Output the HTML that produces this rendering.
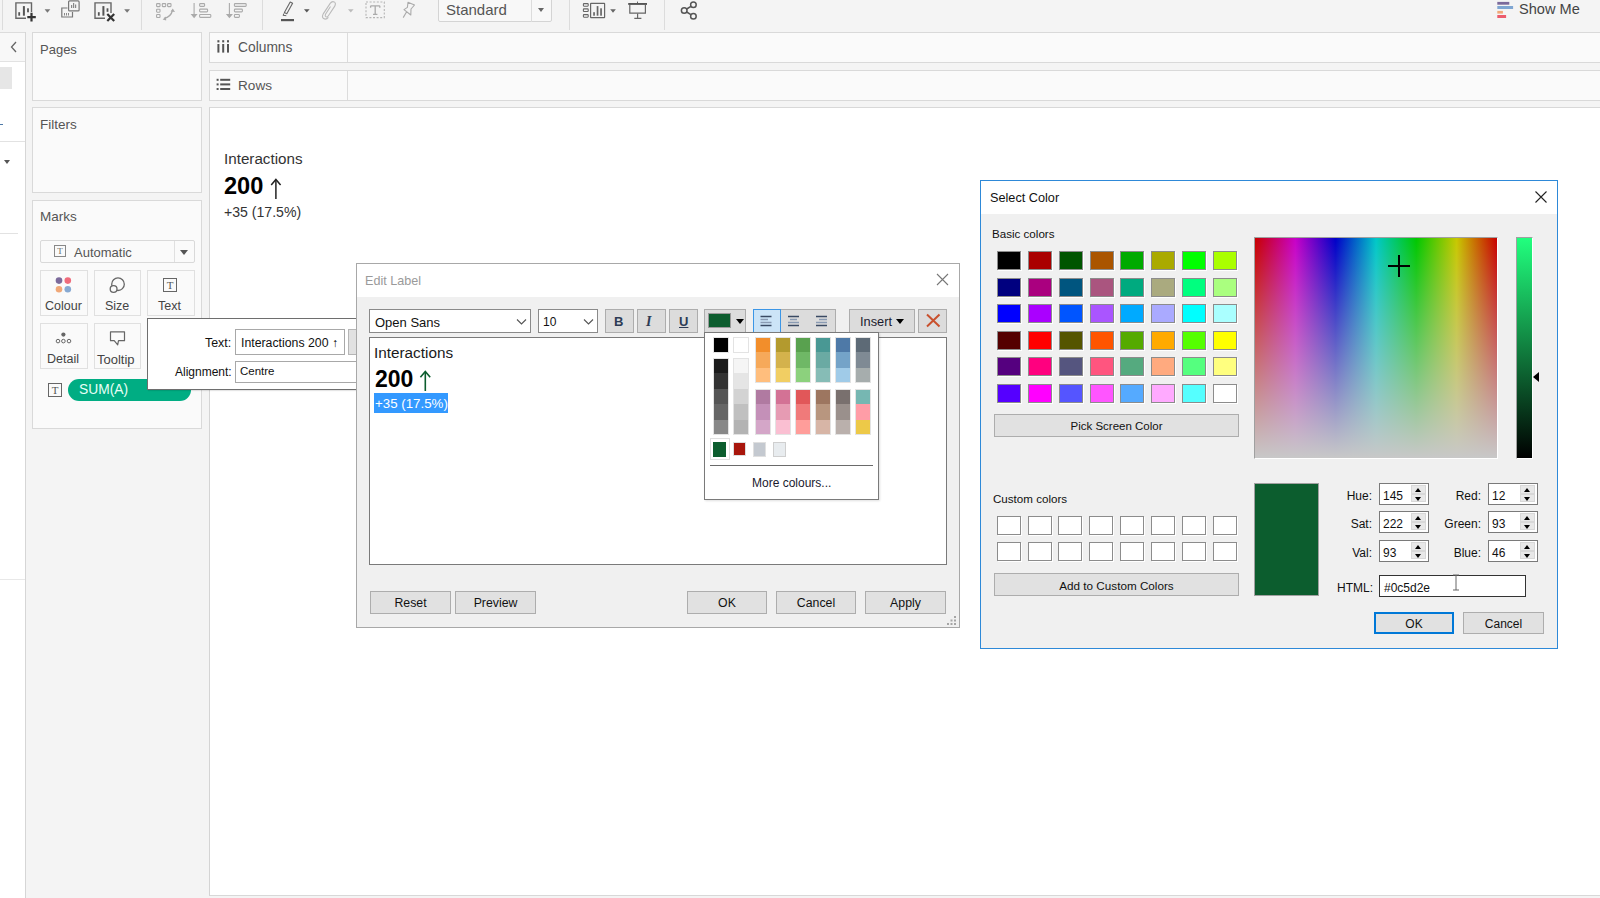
<!DOCTYPE html>
<html><head><meta charset="utf-8">
<style>
*{box-sizing:border-box;margin:0;padding:0}
html,body{width:1600px;height:898px;overflow:hidden;background:#fff;font-family:"Liberation Sans",sans-serif;position:relative}
.a{position:absolute}
.t{position:absolute;white-space:nowrap;line-height:1}
/* toolbar */
#tb{left:0;top:0;width:1600px;height:32px;background:#f4f4f4}
.sep{position:absolute;top:0;width:1px;height:30px;background:#dcdcdc}
/* panels */
.box{position:absolute;background:#fafafa;border:1px solid #d9d9d9}
.tbb{background:#dcdcdc;border:1px solid #adadad}
.wb{background:#e1e1e1;border:1px solid #adadad;font-size:12.3px;color:#111;text-align:center;line-height:23px;white-space:nowrap}
.sw{width:24px;height:19px;border:1px solid #8c8c8c;box-shadow:1px 1px 0 #fff}
.sp{width:50px;height:22px;background:#fff;border:1px solid #7a7a7a}
.spb{width:15px;background:#e8e8e8;border:1px solid #d8d8d8}
</style></head>
<body>
<!-- toolbar -->
<div id="tb" class="a">
  <div class="sep" style="left:2px"></div>
  <div class="sep" style="left:141px"></div>
  <div class="sep" style="left:262px"></div>
  <div class="sep" style="left:569px"></div>
  <div class="sep" style="left:664px"></div>
  <div class="a" style="left:438px;top:-2px;width:114px;height:24px;background:#f8f8f8;border:1px solid #d4d4d4;border-radius:0 0 2px 2px"></div>
  <div class="a" style="left:531px;top:0;width:1px;height:22px;background:#dcdcdc"></div>
  <div class="t" style="left:446px;top:2px;font-size:15px;color:#555">Standard</div>
  <div class="a" style="left:538px;top:8px;width:0;height:0;border-left:3.5px solid transparent;border-right:3.5px solid transparent;border-top:4px solid #666"></div>
<svg class="a" style="left:0;top:0" width="720" height="32">
<g fill="none" stroke="#666" stroke-width="1.4">
 <path d="M31.5 12 V2.9 H15.9 V18.2 H26"/>
</g>
<g fill="#555"><rect x="18.3" y="12.2" width="1.8" height="3.5"/><rect x="22.9" y="6.1" width="2" height="9.6"/><rect x="27.1" y="8.3" width="1.8" height="4"/></g>
<path d="M27.3 17.1 H35.8 M31.5 12.8 V21.4" stroke="#333" stroke-width="2.2"/>
<path d="M44.6 9.2 H50.3 L47.45 12.7 Z" fill="#777"/>
<g fill="none" stroke="#777" stroke-width="1.2">
 <path d="M67.5 8 H61.8 V17 H72.5 V12"/>
 <rect x="68.6" y="0.9" width="10.5" height="10" rx="1"/>
</g>
<g fill="#888"><rect x="64" y="13" width="1" height="2.5"/><rect x="66" y="13" width="1" height="2.5"/><rect x="68" y="13" width="1" height="2.5"/><rect x="71" y="5" width="1.2" height="3"/><rect x="73" y="3" width="1.2" height="5"/><rect x="75" y="4.5" width="1.2" height="3.5"/></g>
<g fill="none" stroke="#666" stroke-width="1.4"><path d="M111 13 V2.9 H95 V18.2 H105"/></g>
<g fill="#555"><rect x="97.9" y="12.2" width="1.8" height="3.5"/><rect x="102.4" y="6.1" width="2" height="9.6"/><rect x="106.6" y="8.3" width="1.8" height="3.5"/></g>
<path d="M107.3 14 L114.2 21 M114.2 14 L107.3 21" stroke="#333" stroke-width="2.2"/>
<path d="M124.2 9.2 H130 L127.1 12.7 Z" fill="#777"/>
<!-- swap -->
<g fill="none" stroke="#aaa" stroke-width="1.1">
 <rect x="156.6" y="3.6" width="3.4" height="3" rx=".6"/><rect x="162.3" y="3.6" width="3.4" height="3" rx=".6"/><rect x="167.6" y="3.6" width="3.4" height="3" rx=".6"/>
 <rect x="156.6" y="9.2" width="3.4" height="3" rx=".6"/><rect x="156.6" y="14.5" width="3.4" height="3" rx=".6"/>
 <path d="M164 18.3 Q171 17 172.4 10.5" stroke-width="1.3"/>
</g>
<path d="M172.8 8.5 L175 12 L170.6 11.6 Z M162.6 19.5 L166 16.6 L166.2 20.6 Z" fill="#aaa"/>
<!-- sort asc -->
<g stroke="#aaa" fill="none" stroke-width="1.1">
 <path d="M194.1 3 V15"/>
 <rect x="199.6" y="3.6" width="5" height="2.8" rx=".8"/><rect x="199.6" y="9.1" width="8" height="2.8" rx=".8"/><rect x="199.6" y="14.5" width="11.2" height="2.9" rx=".8"/>
 <path d="M229.4 3 V15"/>
 <rect x="234.4" y="3.6" width="11.8" height="2.8" rx=".8"/><rect x="234.4" y="9.1" width="8" height="2.8" rx=".8"/><rect x="234.4" y="14.5" width="5" height="2.9" rx=".8"/>
</g>
<path d="M190.6 14 H197.6 L194.1 18.2 Z M225.9 14 H232.9 L229.4 18.2 Z" fill="#aaa"/>
<!-- highlighter -->
<path d="M286.8 13.8 L292.6 3.2 L290.2 2 L284.4 12.6 Z" fill="none" stroke="#666" stroke-width="1.1" stroke-linejoin="round"/>
<path d="M284.2 13.2 L283 15.3 L286.3 15.7" fill="none" stroke="#666" stroke-width="1"/>
<rect x="281" y="19" width="13" height="2.2" fill="#555"/>
<path d="M304 9.3 H309.6 L306.8 12.6 Z" fill="#555"/>
<!-- paperclip -->
<path d="M330.5 6.5 L325.5 14.2 Q324.6 16 326 16.8 Q327.4 17.4 328.4 15.8 L334.6 6.4 Q336.4 3.2 334.2 1.9 Q332 0.8 330.2 3.4 L323.4 13.6 Q321.4 17.2 323.6 18.6 Q326.2 20 328.4 17.4" fill="none" stroke="#bbb" stroke-width="1.1"/>
<path d="M348 9.3 H353.6 L350.8 12.6 Z" fill="#bbb"/>
<!-- T box -->
<rect x="366" y="2" width="18.3" height="15.6" fill="none" stroke="#b5b5b5" stroke-width="1.1" stroke-dasharray="2 1.6"/>
<path d="M370.6 5.8 H379.8 M370.6 5.8 V7.8 M379.8 5.8 V7.8 M375.2 5.8 V14.4 M373 14.4 H377.4" fill="none" stroke="#aaa" stroke-width="1.3"/>
<!-- pin -->
<path d="M408 2.2 L414.5 5 L411 9 L410.8 15 L404 9.6 L407.4 7.4 Z M406.5 12 L403.2 17.6" fill="none" stroke="#aaa" stroke-width="1.1" stroke-linejoin="round"/>
<!-- show cards -->
<g fill="none" stroke="#666" stroke-width="1.1">
 <rect x="583.4" y="3.6" width="4.8" height="2.6" rx=".6"/><rect x="583.4" y="8.9" width="4.8" height="2.6" rx=".6"/><rect x="583.4" y="14.6" width="4.8" height="2.6" rx=".6"/>
 <rect x="590.6" y="3.3" width="14" height="14.4" rx=".4" stroke-width="1.2"/>
</g>
<g fill="#666"><rect x="593.2" y="12.2" width="1.7" height="3.5"/><rect x="596.7" y="6.1" width="1.7" height="9.6"/><rect x="600.2" y="8.3" width="1.7" height="7.4"/></g>
<path d="M610.2 9.2 H615.9 L613 12.7 Z" fill="#666"/>
<!-- presentation -->
<g fill="none" stroke="#666" stroke-width="1.2">
 <path d="M629.8 4.8 V13.2 H645.4 V4.8"/>
 <path d="M637.6 13.4 V18.3 M634.3 18.4 H641.4"/>
</g>
<rect x="628.2" y="3" width="18.8" height="1.9" fill="#555"/>
<rect x="637" y="1.6" width="1" height="1.5" fill="#666"/>
<!-- share -->
<g fill="none" stroke="#555" stroke-width="1.5">
 <circle cx="693.4" cy="4.8" r="2.8"/><circle cx="684.2" cy="10.5" r="2.8"/><circle cx="693.4" cy="16.2" r="2.8"/>
 <path d="M686.7 9 L690.9 6.4 M686.7 12 L690.9 14.6"/>
</g>
</svg>
<svg class="a" style="left:1490px;top:0" width="30" height="24">
 <rect x="7.3" y="1.9" width="12" height="2.8" fill="#7b6a9b"/>
 <rect x="7.3" y="6" width="15.8" height="3" fill="#7fa6d2"/>
 <rect x="7.3" y="10.9" width="5.6" height="2.7" fill="#f0a878"/>
 <rect x="7.3" y="15" width="8.8" height="3" fill="#ec5c6c"/>
</svg>
  <div class="t" style="left:1519px;top:2px;font-size:14.6px;color:#444">Show Me</div>
</div>

<!-- left data column -->
<div class="a" style="left:0;top:32px;width:26px;height:866px;background:#fff;border-right:1px solid #d6d6d6"></div>
<div class="a" style="left:0;top:32px;width:25px;height:30px;background:#f8f8f8;border-top:1px solid #dcdcdc;border-bottom:1px solid #e2e2e2"></div>

<!-- middle column -->
<div class="a" style="left:26px;top:32px;width:184px;height:866px;background:#f4f4f4"></div>
<div class="box" style="left:32px;top:32px;width:170px;height:69px"></div>
<div class="t" style="left:40px;top:43px;font-size:13px;color:#555">Pages</div>
<div class="box" style="left:32px;top:107px;width:170px;height:86px"></div>
<div class="t" style="left:40px;top:118px;font-size:13.5px;color:#555">Filters</div>
<div class="box" style="left:32px;top:200px;width:170px;height:229px"></div>
<div class="t" style="left:40px;top:210px;font-size:13.5px;color:#555">Marks</div>

<!-- shelves -->
<div class="a" style="left:210px;top:32px;width:1390px;height:866px;background:#f4f4f4"></div>
<div class="box" style="left:209px;top:32px;width:1391px;height:31px;border-right:none"></div>
<div class="a" style="left:347px;top:33px;width:1px;height:29px;background:#dcdcdc"></div>
<div class="t" style="left:238px;top:41px;font-size:13.8px;color:#555">Columns</div>
<div class="box" style="left:209px;top:70px;width:1391px;height:31px;border-right:none"></div>
<div class="a" style="left:347px;top:71px;width:1px;height:29px;background:#dcdcdc"></div>
<div class="t" style="left:238px;top:79px;font-size:13.6px;color:#555">Rows</div>

<svg class="a" style="left:214px;top:39px" width="20" height="18"><g fill="#555"><rect x="3.4" y="1.2" width="2" height="2.2"/><rect x="3.4" y="5" width="2" height="8.6"/><rect x="8.2" y="1.2" width="2" height="2.2"/><rect x="8.2" y="5" width="2" height="8.6"/><rect x="13" y="1.2" width="2" height="2.2"/><rect x="13" y="5" width="2" height="8.6"/></g></svg>
<svg class="a" style="left:214px;top:76px" width="20" height="18"><g fill="#555"><rect x="2.6" y="2.8" width="2" height="2"/><rect x="6.2" y="2.8" width="10" height="2"/><rect x="2.6" y="7.4" width="2" height="2"/><rect x="6.2" y="7.4" width="10" height="2"/><rect x="2.6" y="12" width="2" height="2"/><rect x="6.2" y="12" width="10" height="2"/></g></svg>
<!-- canvas -->
<div class="a" style="left:209px;top:107px;width:1391px;height:789px;background:#fff;border-top:1px solid #d8d8d8;border-left:1px solid #d4d4d4;border-bottom:1px solid #d8d8d8"></div>
<div class="t" style="left:224px;top:151px;font-size:15.2px;color:#333">Interactions</div>
<div class="t" style="left:224px;top:175px;font-size:23.6px;font-weight:bold;color:#000">200</div>
<svg class="a" style="left:270px;top:178px" width="12" height="22"><path d="M5.9 2 V21" stroke="#222" stroke-width="1.5"/><path d="M1.2 7 L5.9 1.4 L10.6 7" fill="none" stroke="#222" stroke-width="1.5"/></svg>
<div class="t" style="left:224px;top:205px;font-size:14.1px;color:#333">+35 (17.5%)</div>


<!-- left column details -->
<div class="a" style="left:0;top:67px;width:12px;height:22px;background:#e6e6e6"></div>
<div class="a" style="left:0;top:124px;width:3px;height:1px;background:#4e79a7"></div>
<div class="a" style="left:0;top:141px;width:25px;height:1px;background:#e2e2e2"></div>
<div class="a" style="left:4px;top:160px;width:0;height:0;border-left:3px solid transparent;border-right:3px solid transparent;border-top:4px solid #555"></div>
<div class="a" style="left:0;top:233px;width:18px;height:1px;background:#e2e2e2"></div>
<div class="a" style="left:0;top:579px;width:25px;height:1px;background:#e8e8e8"></div>
<svg class="a" style="left:9px;top:40px" width="10" height="14"><path d="M7 2 L2.5 7 L7 12" fill="none" stroke="#666" stroke-width="1.3"/></svg>

<!-- marks card -->
<div class="a" style="left:40px;top:240px;width:155px;height:23px;background:#fafafa;border:1px solid #d9d9d9;border-radius:2px"></div>
<div class="a" style="left:174px;top:241px;width:1px;height:21px;background:#e0e0e0"></div>
<div class="a" style="left:180px;top:250px;width:0;height:0;border-left:4px solid transparent;border-right:4px solid transparent;border-top:5px solid #555"></div>
<div class="a" style="left:54px;top:245px;width:12px;height:12px;border:1px solid #888;font-size:9px;color:#666;text-align:center;line-height:10px;font-family:'Liberation Serif',serif">T</div>
<div class="t" style="left:74px;top:246px;font-size:13px;color:#555">Automatic</div>

<div class="a" style="left:40px;top:270px;width:48px;height:46px;background:#fafafa;border:1px solid #e0e0e0"></div>
<div class="a" style="left:94px;top:270px;width:47px;height:46px;background:#fafafa;border:1px solid #e0e0e0"></div>
<div class="a" style="left:147px;top:270px;width:48px;height:46px;background:#fafafa;border:1px solid #e0e0e0"></div>
<div class="a" style="left:40px;top:323px;width:48px;height:46px;background:#fafafa;border:1px solid #e0e0e0"></div>
<div class="a" style="left:94px;top:323px;width:47px;height:46px;background:#fafafa;border:1px solid #e0e0e0"></div>
<svg class="a" style="left:52px;top:274px" width="24" height="20">
 <circle cx="7" cy="6.6" r="3.3" fill="#7b6a9b"/><circle cx="15.8" cy="6.6" r="3.3" fill="#ef6b7b"/>
 <circle cx="7" cy="15.3" r="3.3" fill="#f0a878"/><circle cx="15.8" cy="15.3" r="3.3" fill="#87a9d2"/>
</svg>
<svg class="a" style="left:104px;top:274px" width="24" height="22">
 <circle cx="14" cy="10.2" r="6.3" fill="none" stroke="#666" stroke-width="1.3"/>
 <circle cx="9.6" cy="15" r="3.4" fill="#fafafa" stroke="#666" stroke-width="1.3"/>
</svg>
<div class="a" style="left:163px;top:278px;width:14px;height:14px;border:1px solid #666;font-size:11px;color:#555;text-align:center;line-height:12px;font-family:'Liberation Serif',serif">T</div>
<div class="t" style="left:45px;top:300px;font-size:12.5px;color:#444">Colour</div>
<div class="t" style="left:105px;top:300px;font-size:12.5px;color:#444">Size</div>
<div class="t" style="left:158px;top:300px;font-size:12.5px;color:#444">Text</div>
<svg class="a" style="left:52px;top:328px" width="24" height="18">
 <circle cx="11.4" cy="6.6" r="2.1" fill="#666"/>
 <circle cx="6" cy="13.1" r="1.8" fill="none" stroke="#666" stroke-width="1"/>
 <circle cx="11.4" cy="13.1" r="1.8" fill="none" stroke="#666" stroke-width="1"/>
 <circle cx="17" cy="13.1" r="1.8" fill="none" stroke="#666" stroke-width="1"/>
</svg>
<svg class="a" style="left:106px;top:328px" width="24" height="20">
 <path d="M4.5 3.8 H18.5 V12.7 H12.5 L11.7 16.8 L8.2 12.7 H4.5 Z" fill="none" stroke="#666" stroke-width="1.2" stroke-linejoin="round"/>
</svg>
<div class="t" style="left:47px;top:353px;font-size:12.5px;color:#444">Detail</div>
<div class="t" style="left:97px;top:353px;font-size:13px;color:#444">Tooltip</div>

<div class="a" style="left:48px;top:383px;width:14px;height:14px;border:1px solid #666;font-size:11px;color:#555;text-align:center;line-height:12px;font-family:'Liberation Serif',serif">T</div>
<div class="a" style="left:68px;top:379px;width:123px;height:22px;background:#00ad83;border-radius:11px"></div>
<div class="t" style="left:79px;top:383px;font-size:13.8px;color:#e8fff6">SUM(A)</div>

<!-- text popup -->
<div class="a" style="left:147px;top:318px;width:215px;height:72px;background:#fff;border:1px solid #6e6e6e;box-shadow:1px 1px 1px rgba(0,0,0,.1)"></div>
<div class="t" style="left:205px;top:337px;font-size:12.4px;color:#111">Text:</div>
<div class="t" style="left:175px;top:366px;font-size:12px;color:#111">Alignment:</div>
<div class="a" style="left:235px;top:329px;width:110px;height:26px;background:#fff;border:1px solid #a8a8a8"></div>
<div class="t" style="left:241px;top:337px;font-size:12.3px;color:#111">Interactions 200 ↑</div>
<div class="a" style="left:348px;top:329px;width:14px;height:26px;background:#e1e1e1;border:1px solid #b5b5b5"></div>
<div class="a" style="left:235px;top:361px;width:127px;height:22px;background:#fff;border:1px solid #a8a8a8"></div>
<div class="t" style="left:240px;top:366px;font-size:11.5px;color:#111">Centre</div>


<!-- EDIT LABEL DIALOG -->
<div class="a" style="left:356px;top:263px;width:604px;height:365px;background:#f0f0f0;border:1px solid #a8a8a8"></div>
<div class="a" style="left:357px;top:264px;width:602px;height:33px;background:#fff"></div>
<div class="t" style="left:365px;top:275px;font-size:12.6px;color:#9a9a9a">Edit Label</div>
<svg class="a" style="left:936px;top:273px" width="13" height="13"><path d="M1 1 L12 12 M12 1 L1 12" stroke="#777" stroke-width="1.1"/></svg>

<!-- font combo -->
<div class="a" style="left:369px;top:309px;width:162px;height:24px;background:#fff;border:1px solid #8a8a8a"></div>
<div class="t" style="left:375px;top:316px;font-size:13px;color:#111">Open Sans</div>
<svg class="a" style="left:516px;top:318px" width="12" height="8"><path d="M1 1.5 L5.5 6 L10 1.5" fill="none" stroke="#555" stroke-width="1.1"/></svg>
<div class="a" style="left:538px;top:309px;width:60px;height:24px;background:#fff;border:1px solid #8a8a8a"></div>
<div class="t" style="left:543px;top:316px;font-size:12px;color:#111">10</div>
<svg class="a" style="left:583px;top:318px" width="12" height="8"><path d="M1 1.5 L5.5 6 L10 1.5" fill="none" stroke="#555" stroke-width="1.1"/></svg>

<div class="a tbb" style="left:605px;top:309px;width:29px;height:24px"></div>
<div class="a tbb" style="left:637px;top:309px;width:29px;height:24px"></div>
<div class="a tbb" style="left:669px;top:309px;width:29px;height:24px"></div>
<div class="t" style="left:614px;top:315px;font-size:13px;font-weight:bold;color:#2d3b55">B</div>
<div class="t" style="left:646px;top:315px;font-size:14px;font-weight:bold;font-style:italic;color:#2d3b55;font-family:'Liberation Serif',serif">I</div>
<div class="t" style="left:679px;top:315px;font-size:13px;font-weight:bold;color:#2d3b55;text-decoration:underline">U</div>

<div class="a tbb" style="left:704px;top:309px;width:42px;height:24px"></div>
<div class="a" style="left:708px;top:313px;width:23px;height:15px;background:#0c5d2e;border:1px solid #9a9a9a"></div>
<div class="a" style="left:736px;top:319px;width:0;height:0;border-left:4px solid transparent;border-right:4px solid transparent;border-top:5px solid #000"></div>

<div class="a tbb" style="left:753px;top:309px;width:83px;height:24px"></div>
<div class="a" style="left:753px;top:309px;width:28px;height:24px;background:#cce4f7;border:1px solid #3c96e6"></div>
<svg class="a" style="left:755px;top:312px" width="80" height="18">
 <g stroke-width="1.3">
 <path d="M5.5 4.5 H16.5 M5.5 13.5 H16.5" stroke="#3a4a63"/>
 <path d="M5.5 7.5 H13 M5.5 10.5 H16.5" stroke="#8a9bb3"/>
 <path d="M33 4.5 H44 M33 13.5 H44" stroke="#3a4a63"/>
 <path d="M35 7.5 H42 M33 10.5 H44" stroke="#8a9bb3"/>
 <path d="M61 4.5 H72 M61 13.5 H72" stroke="#3a4a63"/>
 <path d="M64 7.5 H72 M61 10.5 H72" stroke="#8a9bb3"/>
 </g>
</svg>

<div class="a tbb" style="left:849px;top:309px;width:66px;height:24px"></div>
<div class="t" style="left:860px;top:316px;font-size:12.8px;color:#1a1a2e">Insert</div>
<div class="a" style="left:896px;top:319px;width:0;height:0;border-left:4px solid transparent;border-right:4px solid transparent;border-top:5px solid #000"></div>
<div class="a tbb" style="left:918px;top:309px;width:29px;height:24px"></div>
<svg class="a" style="left:918px;top:309px" width="29" height="23"><path d="M9 5.5 L21.5 17.5 M21.5 5.5 L9 17.5" stroke="#c9512e" stroke-width="2"/></svg>

<!-- text area -->
<div class="a" style="left:369px;top:337px;width:578px;height:228px;background:#fff;border:1px solid #7a7a7a"></div>
<div class="t" style="left:374px;top:345px;font-size:15.3px;color:#1a1a1a">Interactions</div>
<div class="t" style="left:375px;top:368px;font-size:23px;font-weight:bold;color:#000">200</div>
<svg class="a" style="left:419px;top:370px" width="13" height="22"><path d="M6.3 2 V21" stroke="#0c5d2e" stroke-width="1.6"/><path d="M1.4 7.2 L6.3 1.4 L11.2 7.2" fill="none" stroke="#0c5d2e" stroke-width="1.6"/></svg>
<div class="a" style="left:374px;top:393px;width:74px;height:20px;background:#3399ff"></div>
<div class="t" style="left:375px;top:397px;font-size:13.3px;color:#fff">+35 (17.5%)</div>

<!-- bottom buttons -->
<div class="a wb" style="left:370px;top:591px;width:81px;height:23px">Reset</div>
<div class="a wb" style="left:455px;top:591px;width:81px;height:23px">Preview</div>
<div class="a wb" style="left:687px;top:591px;width:80px;height:23px">OK</div>
<div class="a wb" style="left:776px;top:591px;width:80px;height:23px">Cancel</div>
<div class="a wb" style="left:865px;top:591px;width:81px;height:23px">Apply</div>
<svg class="a" style="left:944px;top:613px" width="14" height="14"><g fill="#a5a5a5"><rect x="10" y="3" width="2" height="2"/><rect x="6.5" y="6.5" width="2" height="2"/><rect x="10" y="6.5" width="2" height="2"/><rect x="3" y="10" width="2" height="2"/><rect x="6.5" y="10" width="2" height="2"/><rect x="10" y="10" width="2" height="2"/></g></svg>

<!-- COLOUR POPUP -->
<div class="a" style="left:704px;top:332px;width:175px;height:168px;background:#fff;border:1px solid #7a7a7a;box-shadow:1px 1px 2px rgba(0,0,0,.12)"></div>
<div class="a" style="left:713px;top:337px;width:16px;height:16px;border:1px solid #e3e3e3;background:#e3e3e3"><div style="position:absolute;left:0;top:0px;width:14px;height:14px;background:#000000"></div></div>
<div class="a" style="left:733px;top:337px;width:16px;height:16px;border:1px solid #e3e3e3;background:#e3e3e3"><div style="position:absolute;left:0;top:0px;width:14px;height:14px;background:#ffffff"></div></div>
<div class="a" style="left:713px;top:358px;width:16px;height:77px;border:1px solid #e3e3e3;background:#e3e3e3"><div style="position:absolute;left:0;top:0px;width:14px;height:14px;background:#1b1b1b"></div><div style="position:absolute;left:0;top:14px;width:14px;height:16px;background:#333333"></div><div style="position:absolute;left:0;top:30px;width:14px;height:15px;background:#555555"></div><div style="position:absolute;left:0;top:45px;width:14px;height:16px;background:#666666"></div><div style="position:absolute;left:0;top:61px;width:14px;height:14px;background:#888888"></div></div>
<div class="a" style="left:733px;top:358px;width:16px;height:77px;border:1px solid #e3e3e3;background:#e3e3e3"><div style="position:absolute;left:0;top:0px;width:14px;height:14px;background:#f5f5f5"></div><div style="position:absolute;left:0;top:14px;width:14px;height:16px;background:#e5e5e5"></div><div style="position:absolute;left:0;top:30px;width:14px;height:15px;background:#d3d3d3"></div><div style="position:absolute;left:0;top:45px;width:14px;height:16px;background:#c0c0c0"></div><div style="position:absolute;left:0;top:61px;width:14px;height:14px;background:#b3b3b3"></div></div>
<div class="a" style="left:755px;top:337px;width:16px;height:46px;border:1px solid #e3e3e3;background:#e3e3e3"><div style="position:absolute;left:0;top:0px;width:14px;height:14px;background:#f28e2b"></div><div style="position:absolute;left:0;top:14px;width:14px;height:16px;background:#f6a95a"></div><div style="position:absolute;left:0;top:30px;width:14px;height:14px;background:#ffbe7d"></div></div>
<div class="a" style="left:775px;top:337px;width:16px;height:46px;border:1px solid #e3e3e3;background:#e3e3e3"><div style="position:absolute;left:0;top:0px;width:14px;height:14px;background:#b39a2e"></div><div style="position:absolute;left:0;top:14px;width:14px;height:16px;background:#d4b24c"></div><div style="position:absolute;left:0;top:30px;width:14px;height:14px;background:#f1ce63"></div></div>
<div class="a" style="left:795px;top:337px;width:16px;height:46px;border:1px solid #e3e3e3;background:#e3e3e3"><div style="position:absolute;left:0;top:0px;width:14px;height:14px;background:#59a14f"></div><div style="position:absolute;left:0;top:14px;width:14px;height:16px;background:#6fb866"></div><div style="position:absolute;left:0;top:30px;width:14px;height:14px;background:#8cd17d"></div></div>
<div class="a" style="left:815px;top:337px;width:16px;height:46px;border:1px solid #e3e3e3;background:#e3e3e3"><div style="position:absolute;left:0;top:0px;width:14px;height:14px;background:#499894"></div><div style="position:absolute;left:0;top:14px;width:14px;height:16px;background:#6aaaa3"></div><div style="position:absolute;left:0;top:30px;width:14px;height:14px;background:#86bcb6"></div></div>
<div class="a" style="left:835px;top:337px;width:16px;height:46px;border:1px solid #e3e3e3;background:#e3e3e3"><div style="position:absolute;left:0;top:0px;width:14px;height:14px;background:#4e79a7"></div><div style="position:absolute;left:0;top:14px;width:14px;height:16px;background:#74a3c8"></div><div style="position:absolute;left:0;top:30px;width:14px;height:14px;background:#a0cbe8"></div></div>
<div class="a" style="left:855px;top:337px;width:16px;height:46px;border:1px solid #e3e3e3;background:#e3e3e3"><div style="position:absolute;left:0;top:0px;width:14px;height:14px;background:#5d6a76"></div><div style="position:absolute;left:0;top:14px;width:14px;height:16px;background:#7f8a94"></div><div style="position:absolute;left:0;top:30px;width:14px;height:14px;background:#a6adad"></div></div>
<div class="a" style="left:755px;top:389px;width:16px;height:46px;border:1px solid #e3e3e3;background:#e3e3e3"><div style="position:absolute;left:0;top:0px;width:14px;height:14px;background:#b07aa1"></div><div style="position:absolute;left:0;top:14px;width:14px;height:16px;background:#c490b8"></div><div style="position:absolute;left:0;top:30px;width:14px;height:14px;background:#d4a6c8"></div></div>
<div class="a" style="left:775px;top:389px;width:16px;height:46px;border:1px solid #e3e3e3;background:#e3e3e3"><div style="position:absolute;left:0;top:0px;width:14px;height:14px;background:#d37295"></div><div style="position:absolute;left:0;top:14px;width:14px;height:16px;background:#e69bb3"></div><div style="position:absolute;left:0;top:30px;width:14px;height:14px;background:#fabfd2"></div></div>
<div class="a" style="left:795px;top:389px;width:16px;height:46px;border:1px solid #e3e3e3;background:#e3e3e3"><div style="position:absolute;left:0;top:0px;width:14px;height:14px;background:#e15759"></div><div style="position:absolute;left:0;top:14px;width:14px;height:16px;background:#f07a7a"></div><div style="position:absolute;left:0;top:30px;width:14px;height:14px;background:#ff9d9a"></div></div>
<div class="a" style="left:815px;top:389px;width:16px;height:46px;border:1px solid #e3e3e3;background:#e3e3e3"><div style="position:absolute;left:0;top:0px;width:14px;height:14px;background:#9d7660"></div><div style="position:absolute;left:0;top:14px;width:14px;height:16px;background:#b8967f"></div><div style="position:absolute;left:0;top:30px;width:14px;height:14px;background:#d7b5a6"></div></div>
<div class="a" style="left:835px;top:389px;width:16px;height:46px;border:1px solid #e3e3e3;background:#e3e3e3"><div style="position:absolute;left:0;top:0px;width:14px;height:14px;background:#79706e"></div><div style="position:absolute;left:0;top:14px;width:14px;height:16px;background:#9a908c"></div><div style="position:absolute;left:0;top:30px;width:14px;height:14px;background:#bab0ac"></div></div>
<div class="a" style="left:855px;top:389px;width:16px;height:46px;border:1px solid #e3e3e3;background:#e3e3e3"><div style="position:absolute;left:0;top:0px;width:14px;height:14px;background:#76b7b2"></div><div style="position:absolute;left:0;top:14px;width:14px;height:16px;background:#ff9da7"></div><div style="position:absolute;left:0;top:30px;width:14px;height:14px;background:#edc948"></div></div>
<div class="a" style="left:710px;top:438px;width:20px;height:22px;border:1px solid #e0e0e0;background:#fff"></div>
<div class="a" style="left:713px;top:442px;width:13px;height:15px;background:#0c5d2e"></div>
<div class="a" style="left:733px;top:442px;width:13px;height:14px;background:#a8160c;border:1px solid #ddd"></div>
<div class="a" style="left:753px;top:442px;width:13px;height:15px;background:#c4c9d0;border:1px solid #e0e0e0"></div>
<div class="a" style="left:773px;top:442px;width:13px;height:15px;background:#e8ecef;border:1px solid #cfcfcf"></div>
<div class="a" style="left:710px;top:465px;width:163px;height:1px;background:#6a6a6a"></div>
<div class="t" style="left:752px;top:477px;font-size:12px;color:#1a1a2e">More colours...</div>
<!-- SELECT COLOR DIALOG -->
<div class="a" style="left:980px;top:180px;width:578px;height:469px;background:#f0f0f0;border:1px solid #2e89d8"></div>
<div class="a" style="left:981px;top:181px;width:576px;height:33px;background:#fff"></div>
<div class="t" style="left:990px;top:192px;font-size:12.7px;color:#111">Select Color</div>
<svg class="a" style="left:1534px;top:190px" width="14" height="14"><path d="M1.5 1.5 L12.5 12.5 M12.5 1.5 L1.5 12.5" stroke="#222" stroke-width="1.1"/></svg>
<div class="t" style="left:992px;top:228px;font-size:11.6px;color:#111">Basic colors</div>
<div class="a sw" style="left:997px;top:251px;background:#000000"></div>
<div class="a sw" style="left:997px;top:278px;background:#00007f"></div>
<div class="a sw" style="left:997px;top:304px;background:#0000ff"></div>
<div class="a sw" style="left:997px;top:331px;background:#550000"></div>
<div class="a sw" style="left:997px;top:357px;background:#55007f"></div>
<div class="a sw" style="left:997px;top:384px;background:#5500ff"></div>
<div class="a sw" style="left:1028px;top:251px;background:#aa0000"></div>
<div class="a sw" style="left:1028px;top:278px;background:#aa007f"></div>
<div class="a sw" style="left:1028px;top:304px;background:#aa00ff"></div>
<div class="a sw" style="left:1028px;top:331px;background:#ff0000"></div>
<div class="a sw" style="left:1028px;top:357px;background:#ff007f"></div>
<div class="a sw" style="left:1028px;top:384px;background:#ff00ff"></div>
<div class="a sw" style="left:1059px;top:251px;background:#005500"></div>
<div class="a sw" style="left:1059px;top:278px;background:#00557f"></div>
<div class="a sw" style="left:1059px;top:304px;background:#0055ff"></div>
<div class="a sw" style="left:1059px;top:331px;background:#555500"></div>
<div class="a sw" style="left:1059px;top:357px;background:#55557f"></div>
<div class="a sw" style="left:1059px;top:384px;background:#5555ff"></div>
<div class="a sw" style="left:1090px;top:251px;background:#aa5500"></div>
<div class="a sw" style="left:1090px;top:278px;background:#aa557f"></div>
<div class="a sw" style="left:1090px;top:304px;background:#aa55ff"></div>
<div class="a sw" style="left:1090px;top:331px;background:#ff5500"></div>
<div class="a sw" style="left:1090px;top:357px;background:#ff557f"></div>
<div class="a sw" style="left:1090px;top:384px;background:#ff55ff"></div>
<div class="a sw" style="left:1120px;top:251px;background:#00aa00"></div>
<div class="a sw" style="left:1120px;top:278px;background:#00aa7f"></div>
<div class="a sw" style="left:1120px;top:304px;background:#00aaff"></div>
<div class="a sw" style="left:1120px;top:331px;background:#55aa00"></div>
<div class="a sw" style="left:1120px;top:357px;background:#55aa7f"></div>
<div class="a sw" style="left:1120px;top:384px;background:#55aaff"></div>
<div class="a sw" style="left:1151px;top:251px;background:#aaaa00"></div>
<div class="a sw" style="left:1151px;top:278px;background:#aaaa7f"></div>
<div class="a sw" style="left:1151px;top:304px;background:#aaaaff"></div>
<div class="a sw" style="left:1151px;top:331px;background:#ffaa00"></div>
<div class="a sw" style="left:1151px;top:357px;background:#ffaa7f"></div>
<div class="a sw" style="left:1151px;top:384px;background:#ffaaff"></div>
<div class="a sw" style="left:1182px;top:251px;background:#00ff00"></div>
<div class="a sw" style="left:1182px;top:278px;background:#00ff7f"></div>
<div class="a sw" style="left:1182px;top:304px;background:#00ffff"></div>
<div class="a sw" style="left:1182px;top:331px;background:#55ff00"></div>
<div class="a sw" style="left:1182px;top:357px;background:#55ff7f"></div>
<div class="a sw" style="left:1182px;top:384px;background:#55ffff"></div>
<div class="a sw" style="left:1213px;top:251px;background:#aaff00"></div>
<div class="a sw" style="left:1213px;top:278px;background:#aaff7f"></div>
<div class="a sw" style="left:1213px;top:304px;background:#aaffff"></div>
<div class="a sw" style="left:1213px;top:331px;background:#ffff00"></div>
<div class="a sw" style="left:1213px;top:357px;background:#ffff7f"></div>
<div class="a sw" style="left:1213px;top:384px;background:#ffffff"></div>
<div class="a wb" style="left:994px;top:414px;width:245px;height:23px;font-size:11.5px;line-height:23px">Pick Screen Color</div>
<div class="t" style="left:993px;top:493px;font-size:11.6px;color:#111">Custom colors</div>
<div class="a sw" style="left:997px;top:516px;background:#fff"></div>
<div class="a sw" style="left:997px;top:542px;background:#fff"></div>
<div class="a sw" style="left:1028px;top:516px;background:#fff"></div>
<div class="a sw" style="left:1028px;top:542px;background:#fff"></div>
<div class="a sw" style="left:1058px;top:516px;background:#fff"></div>
<div class="a sw" style="left:1058px;top:542px;background:#fff"></div>
<div class="a sw" style="left:1089px;top:516px;background:#fff"></div>
<div class="a sw" style="left:1089px;top:542px;background:#fff"></div>
<div class="a sw" style="left:1120px;top:516px;background:#fff"></div>
<div class="a sw" style="left:1120px;top:542px;background:#fff"></div>
<div class="a sw" style="left:1151px;top:516px;background:#fff"></div>
<div class="a sw" style="left:1151px;top:542px;background:#fff"></div>
<div class="a sw" style="left:1182px;top:516px;background:#fff"></div>
<div class="a sw" style="left:1182px;top:542px;background:#fff"></div>
<div class="a sw" style="left:1213px;top:516px;background:#fff"></div>
<div class="a sw" style="left:1213px;top:542px;background:#fff"></div>
<div class="a wb" style="left:994px;top:573px;width:245px;height:23px;font-size:11.7px;line-height:23px">Add to Custom Colors</div>
<div class="a" style="left:1254px;top:237px;width:244px;height:222px;border-top:1px solid #a0a0a0;border-left:1px solid #a0a0a0;border-right:1px solid #fff;border-bottom:1px solid #fff"></div>
<div class="a" style="left:1255px;top:238px;width:242px;height:220px;background:linear-gradient(to bottom, rgba(200,200,200,0), rgb(200,200,200)), linear-gradient(to right, rgb(200,0,0) 0%, rgb(200,0,200) 16.667%, rgb(0,0,200) 33.333%, rgb(0,200,200) 50%, rgb(0,200,0) 66.667%, rgb(200,200,0) 83.333%, rgb(200,0,0) 100%)"></div>
<div class="a" style="left:1398px;top:255px;width:2px;height:22px;background:#000"></div>
<div class="a" style="left:1388px;top:265px;width:22px;height:2px;background:#000"></div>
<div class="a" style="left:1516px;top:237px;width:17px;height:222px;border-top:1px solid #a0a0a0;border-left:1px solid #a0a0a0;border-right:1px solid #fff;border-bottom:1px solid #fff"></div>
<div class="a" style="left:1517px;top:238px;width:15px;height:220px;background:linear-gradient(to bottom, rgb(33,255,126), rgb(0,0,0))"></div>
<div class="a" style="left:1533px;top:372px;width:0;height:0;border-top:5px solid transparent;border-bottom:5px solid transparent;border-right:6px solid #000"></div>
<div class="a" style="left:1254px;top:483px;width:65px;height:113px;background:#0c5d2e;border:1px solid #a0a0a0"></div>
<div class="a sp" style="left:1379px;top:483px"></div><div class="t" style="left:1383px;top:490px;font-size:12px;color:#111">145</div><div class="a spb" style="left:1411px;top:485px;height:9px"></div><div class="a spb" style="left:1411px;top:494px;height:8px"></div><div class="a" style="left:1415px;top:488px;width:0;height:0;border-left:3.5px solid transparent;border-right:3.5px solid transparent;border-bottom:4px solid #000"></div><div class="a" style="left:1415px;top:497px;width:0;height:0;border-left:3.5px solid transparent;border-right:3.5px solid transparent;border-top:4px solid #000"></div><div class="t" style="left:1252px;width:120px;text-align:right;top:490px;font-size:12px;color:#111">Hue:</div>
<div class="a sp" style="left:1379px;top:511px"></div><div class="t" style="left:1383px;top:518px;font-size:12px;color:#111">222</div><div class="a spb" style="left:1411px;top:513px;height:9px"></div><div class="a spb" style="left:1411px;top:522px;height:8px"></div><div class="a" style="left:1415px;top:516px;width:0;height:0;border-left:3.5px solid transparent;border-right:3.5px solid transparent;border-bottom:4px solid #000"></div><div class="a" style="left:1415px;top:525px;width:0;height:0;border-left:3.5px solid transparent;border-right:3.5px solid transparent;border-top:4px solid #000"></div><div class="t" style="left:1252px;width:120px;text-align:right;top:518px;font-size:12px;color:#111">Sat:</div>
<div class="a sp" style="left:1379px;top:540px"></div><div class="t" style="left:1383px;top:547px;font-size:12px;color:#111">93</div><div class="a spb" style="left:1411px;top:542px;height:9px"></div><div class="a spb" style="left:1411px;top:551px;height:8px"></div><div class="a" style="left:1415px;top:545px;width:0;height:0;border-left:3.5px solid transparent;border-right:3.5px solid transparent;border-bottom:4px solid #000"></div><div class="a" style="left:1415px;top:554px;width:0;height:0;border-left:3.5px solid transparent;border-right:3.5px solid transparent;border-top:4px solid #000"></div><div class="t" style="left:1252px;width:120px;text-align:right;top:547px;font-size:12px;color:#111">Val:</div>
<div class="a sp" style="left:1488px;top:483px"></div><div class="t" style="left:1492px;top:490px;font-size:12px;color:#111">12</div><div class="a spb" style="left:1520px;top:485px;height:9px"></div><div class="a spb" style="left:1520px;top:494px;height:8px"></div><div class="a" style="left:1524px;top:488px;width:0;height:0;border-left:3.5px solid transparent;border-right:3.5px solid transparent;border-bottom:4px solid #000"></div><div class="a" style="left:1524px;top:497px;width:0;height:0;border-left:3.5px solid transparent;border-right:3.5px solid transparent;border-top:4px solid #000"></div><div class="t" style="left:1361px;width:120px;text-align:right;top:490px;font-size:12px;color:#111">Red:</div>
<div class="a sp" style="left:1488px;top:511px"></div><div class="t" style="left:1492px;top:518px;font-size:12px;color:#111">93</div><div class="a spb" style="left:1520px;top:513px;height:9px"></div><div class="a spb" style="left:1520px;top:522px;height:8px"></div><div class="a" style="left:1524px;top:516px;width:0;height:0;border-left:3.5px solid transparent;border-right:3.5px solid transparent;border-bottom:4px solid #000"></div><div class="a" style="left:1524px;top:525px;width:0;height:0;border-left:3.5px solid transparent;border-right:3.5px solid transparent;border-top:4px solid #000"></div><div class="t" style="left:1361px;width:120px;text-align:right;top:518px;font-size:12px;color:#111">Green:</div>
<div class="a sp" style="left:1488px;top:540px"></div><div class="t" style="left:1492px;top:547px;font-size:12px;color:#111">46</div><div class="a spb" style="left:1520px;top:542px;height:9px"></div><div class="a spb" style="left:1520px;top:551px;height:8px"></div><div class="a" style="left:1524px;top:545px;width:0;height:0;border-left:3.5px solid transparent;border-right:3.5px solid transparent;border-bottom:4px solid #000"></div><div class="a" style="left:1524px;top:554px;width:0;height:0;border-left:3.5px solid transparent;border-right:3.5px solid transparent;border-top:4px solid #000"></div><div class="t" style="left:1361px;width:120px;text-align:right;top:547px;font-size:12px;color:#111">Blue:</div>
<div class="a" style="left:1379px;top:575px;width:147px;height:22px;background:#fff;border:1px solid #333"></div>
<div class="t" style="left:1384px;top:582px;font-size:12px;color:#111">#0c5d2e</div>
<div class="t" style="left:1253px;width:120px;text-align:right;top:582px;font-size:12px;color:#111">HTML:</div>
<svg class="a" style="left:1450px;top:573px" width="12" height="20"><path d="M3 2 H9 M6 2 V17 M3 17 H9" stroke="#666" stroke-width="1"/></svg>
<div class="a wb" style="left:1374px;top:612px;width:80px;height:22px;border:2px solid #0078d7;line-height:20px;font-size:12px">OK</div>
<div class="a wb" style="left:1463px;top:612px;width:81px;height:22px;line-height:22px;font-size:12px">Cancel</div>
</body></html>
